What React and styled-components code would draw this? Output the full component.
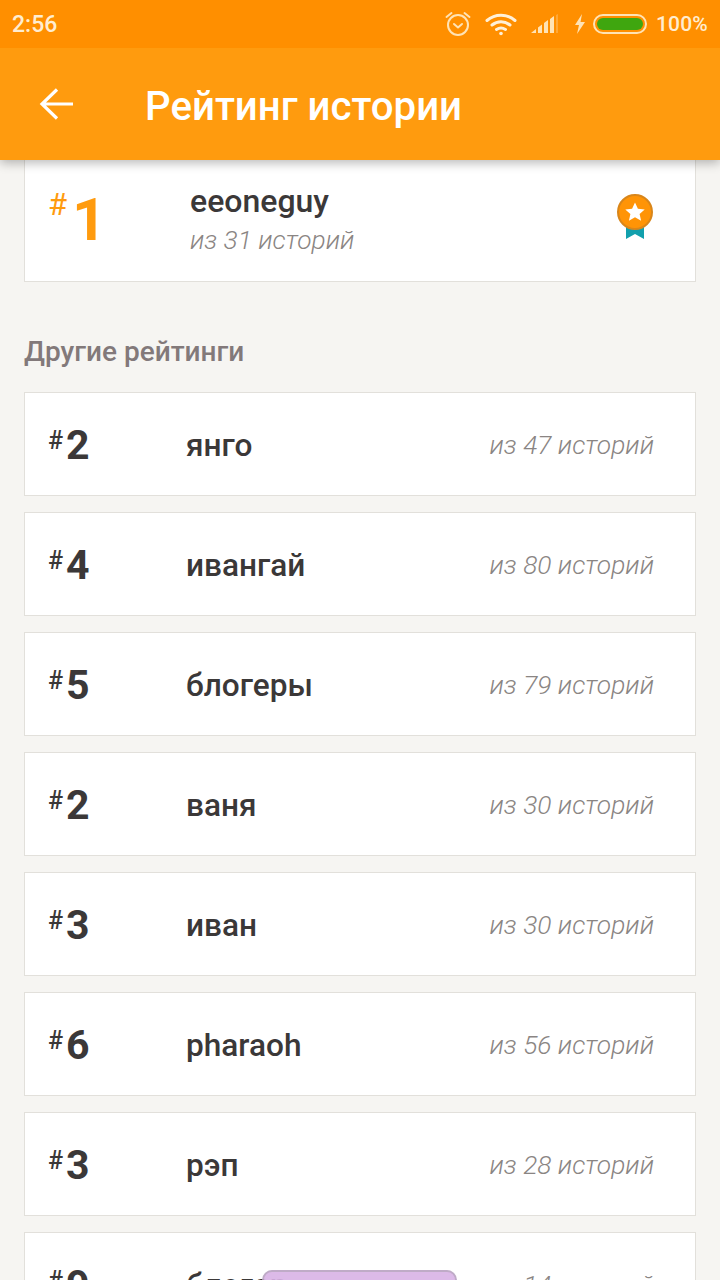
import React from "react";
import styled, { createGlobalStyle } from "styled-components";

const Global = createGlobalStyle`
  html, body { margin: 0; padding: 0; height: 1280px; overflow: hidden; background: #f6f5f2; }
  body { font-family: Roboto, "Noto Sans", sans-serif; }
  * { box-sizing: border-box; }
`;

const Screen = styled.div`
  width: 720px; height: 1280px; overflow: hidden; position: relative;
  display: flex; flex-direction: column; background: #f6f5f2;
`;
const Header = styled.header`
  flex: none; position: relative; z-index: 2;
  box-shadow: 0 3px 10px rgba(0,0,0,.28);
`;
const StatusBar = styled.div`
  height: 48px; background: #ff8f00; color: #ffedd0;
  display: flex; align-items: center; justify-content: space-between;
  padding: 0 12px 0 12px;
`;
const Time = styled.span`font-size: 23px; font-weight: 500;`;
const StatusIcons = styled.div`display: flex; align-items: center;`;
const Percent = styled.span`font-size: 21px; font-weight: 500; margin-left: 9px; letter-spacing: .2px;`;
const AppBar = styled.div`
  height: 112px; background: #ff9b0e; color: #fff;
  display: flex; align-items: center; padding: 0 0 0 38px;
`;
const BackIcon = styled.svg`width: 36px; height: 36px; flex: none; margin-right: 71px;`;
const Title = styled.h1`margin: 6px 0 0; font-size: 40.2px; font-weight: 500; line-height: 1;`;

const Content = styled.main`
  flex: 1; min-height: 0; padding: 0 24px; margin-top: -1px;
`;
const TopCard = styled.section`
  height: 123px; background: #fff; border: 1px solid #e2e0db; border-top: 0;
  display: flex; align-items: center; padding: 0 41px 0 23px;
`;
const TopRank = styled.div`
  width: 142px; flex: none; color: #ff9b0e; font-size: 60px; font-weight: 700; line-height: 1;
  display: flex; align-items: flex-start; height: 64px; margin-top: 4px;
`;
const TopHash = styled.span`font-size: 31px; font-weight: 400; line-height: 1; margin: -1px 5px 0 0;`;
const TopInfo = styled.div`flex: 1; display: flex; flex-direction: column; gap: 5px; margin-top: -2px;`;
const TopName = styled.div`font-size: 32px; font-weight: 500; color: #3b3838; line-height: 36px;`;
const TopCount = styled.div`font-size: 26.3px; font-weight: 300; font-style: italic; color: #8a8583; line-height: 32px;`;
const Medal = styled.svg`width: 38px; height: 46px; flex: none; margin-top: -6px;`;

const SectionTitle = styled.h2`
  margin: 54px 0 24px; height: 32px; font-size: 28px; line-height: 32px; font-weight: 500; color: #82797a;
`;
const List = styled.div`display: flex; flex-direction: column; gap: 16px;`;
const Row = styled.div`
  height: 104px; flex: none; position: relative; background: #fff; border: 1px solid #e2e0db;
  display: flex; align-items: center; padding: 2px 41px 0 23px;
`;
const Rank = styled.div`
  width: 138px; flex: none; display: flex; align-items: flex-start; color: #3b3838;
  font-size: 41px; font-weight: 700; line-height: 44px;
`;
const Hash = styled.span`font-size: 25px; font-weight: 500; line-height: 26px; margin: 5px 3px 0 0;`;
const Name = styled.div`flex: 1; font-size: 31.6px; font-weight: 500; color: #3b3838;`;
const Count = styled.div`font-size: 26.3px; font-weight: 300; font-style: italic; color: #8a8583;`;
const Toast = styled.div`
  position: absolute; left: 262px; top: 1270px; width: 195px; height: 40px; z-index: 1;
  background: #d9b3e6; border: 2px solid #b9a3c2; border-radius: 10px; opacity: .9;
`;

const rows = [
  ["2", "янго", 47], ["4", "ивангай", 80], ["5", "блогеры", 79], ["2", "ваня", 30],
  ["3", "иван", 30], ["6", "pharaoh", 56], ["3", "рэп", 28], ["9", "блогер", 14],
];

const Alarm = () => (
  <svg width="28" height="28" viewBox="0 0 28 28" fill="none" stroke="#ffe3b5" strokeWidth="2" strokeLinecap="round" strokeLinejoin="round">
    <circle cx="14" cy="15" r="10" />
    <path d="M10 14l4 3.5 4-3.5M2.5 7l5-4M25.5 7l-5-4" />
  </svg>
);
const Wifi = () => (
  <svg width="32" height="24" viewBox="0 0 32 24" fill="none" stroke="#fff0d8" strokeWidth="3" strokeLinecap="round" style={{ marginLeft: 13 }}>
    <path d="M2 8.5C10 1.5 22 1.5 30 8.5M7 13c5.500-4.500 12.500-4.500 18 0M11.500 17.500c3-2 6-2 9 0" />
    <circle cx="16" cy="21.500" r="1.800" fill="#fff0d8" stroke="none" />
  </svg>
);
const Signal = () => (
  <svg width="30" height="20" viewBox="0 0 30 20" fill="#ffe3b5" style={{ marginLeft: 13 }}>
    <path d="M1 19l5-4v4zM8 13.500l4-3V19H8zM14 9l4-3v13h-4zM20 5l4-3v17h-4z" />
    <path d="M26 1l2-1v19h-2z" opacity=".3" />
  </svg>
);
const Bolt = () => (
  <svg width="12" height="20" viewBox="0 0 12 20" fill="#ffe3b5" style={{ marginLeft: 14 }}>
    <path d="M8 0L1 11h4l-2 9 8-12H6.500z" />
  </svg>
);
const Battery = () => (
  <svg width="54" height="20" viewBox="0 0 54 20" style={{ marginLeft: 7 }}>
    <rect x="1" y="1" width="52" height="18" rx="9" fill="none" stroke="#ffe3b5" strokeWidth="2" />
    <rect x="4" y="4" width="46" height="12" rx="6" fill="#3fa60f" />
  </svg>
);

export default function App() {
  return (
    <Screen>
      <Global />
      <Header>
        <StatusBar>
          <Time>2:56</Time>
          <StatusIcons>
            <Alarm /><Wifi /><Signal /><Bolt /><Battery />
            <Percent>100%</Percent>
          </StatusIcons>
        </StatusBar>
        <AppBar>
          <BackIcon viewBox="0 0 36 36" fill="none" stroke="#fff" strokeWidth="3.200">
            <path d="M35 18H5M19 3.500L4 18l15 14.500" />
          </BackIcon>
          <Title>Рейтинг истории</Title>
        </AppBar>
      </Header>
      <Content>
        <TopCard>
          <TopRank><TopHash>#</TopHash>1</TopRank>
          <TopInfo>
            <TopName>eeoneguy</TopName>
            <TopCount>из 31 историй</TopCount>
          </TopInfo>
          <Medal viewBox="0 0 38 46">
            <path d="M10 26h18v19l-9-5-9 5z" fill="#12a0ad" />
            <circle cx="19" cy="18" r="17" fill="#ff9406" stroke="#d9861a" strokeWidth="2" />
            <path d="M19 8.500l2.900 6.300 6.800.7-5.100 4.600 1.500 6.700-6.100-3.500-6.100 3.500 1.500-6.700-5.100-4.600 6.800-.7z" fill="#fff" />
          </Medal>
        </TopCard>
        <SectionTitle>Другие рейтинги</SectionTitle>
        <List>
          {rows.map(([rank, name, total], i) => (
            <Row key={i}>
              <Rank><Hash>#</Hash>{rank}</Rank>
              <Name>{name}</Name>
              <Count>из {total} историй</Count>
            </Row>
          ))}
        </List>
      </Content>
      <Toast />
    </Screen>
  );
}
